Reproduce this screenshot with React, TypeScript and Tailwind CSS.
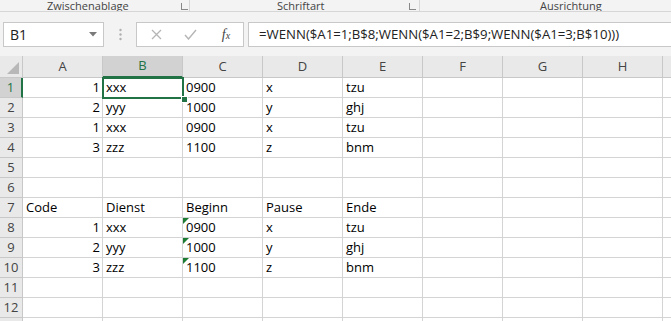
import React from "react";

const COLS = ["A", "B", "C", "D", "E", "F", "G", "H", "I"];

type Cell = { v: string; num?: boolean; tri?: boolean };

const rows: (Cell | null)[][] = [
  [{ v: "1", num: true }, { v: "xxx" }, { v: "0900" }, { v: "x" }, { v: "tzu" }],
  [{ v: "2", num: true }, { v: "yyy" }, { v: "1000" }, { v: "y" }, { v: "ghj" }],
  [{ v: "1", num: true }, { v: "xxx" }, { v: "0900" }, { v: "x" }, { v: "tzu" }],
  [{ v: "3", num: true }, { v: "zzz" }, { v: "1100" }, { v: "z" }, { v: "bnm" }],
  [],
  [],
  [{ v: "Code" }, { v: "Dienst" }, { v: "Beginn" }, { v: "Pause" }, { v: "Ende" }],
  [{ v: "1", num: true }, { v: "xxx" }, { v: "0900", tri: true }, { v: "x" }, { v: "tzu" }],
  [{ v: "2", num: true }, { v: "yyy" }, { v: "1000", tri: true }, { v: "y" }, { v: "ghj" }],
  [{ v: "3", num: true }, { v: "zzz" }, { v: "1100", tri: true }, { v: "z" }, { v: "bnm" }],
  [],
  [],
  [],
];

const ui = { fontFamily: '"Open Sans", "Noto Sans", sans-serif' };

export default function App() {
  return (
    <div className="w-[671px] h-[321px] overflow-hidden bg-white relative" style={ui}>
      {/* Ribbon group labels */}
      <div className="h-[12px] bg-[#f3f3f3] border-b border-[#d6d6d6] relative overflow-hidden text-[11px] text-[#444] leading-[11px] flex items-end">
        <div className="w-[190px] flex items-end relative h-full border-r border-[#d6d6d6]">
          <span className="absolute left-[47px] bottom-[0px]">Zwischenablage</span>
          <span className="absolute left-[181px] bottom-[1px] w-[7px] h-[7px] border-l border-b border-[#888]" />
        </div>
        <div className="w-[230px] flex items-end relative h-full border-r border-[#d6d6d6]">
          <span className="absolute left-[87px] bottom-[0px]">Schriftart</span>
          <span className="absolute left-[219px] bottom-[1px] w-[7px] h-[7px] border-l border-b border-[#888]" />
        </div>
        <div className="flex-1 relative h-full">
          <span className="absolute left-[120px] bottom-[0px]">Ausrichtung</span>
        </div>
      </div>

      {/* Formula bar area */}
      <div className="h-[44px] bg-[#f3f3f3] flex items-start pt-[10px] pl-[3px]">
        <div className="w-[101px] h-[25px] bg-white border border-[#c8c8c8] flex items-center justify-between pl-[6px] pr-[6px] text-[14px] text-[#222]">
          <span>B1</span>
          <svg width="8" height="5" viewBox="0 0 8 5"><path d="M0 0 L8 0 L4 4.5 Z" fill="#7a7a7a" /></svg>
        </div>
        <div className="w-[32px] h-[25px] flex items-center justify-center">
          <svg width="3" height="13" viewBox="0 0 3 13">
            <circle cx="1.5" cy="2" r="1.2" fill="#b0b0b0" />
            <circle cx="1.5" cy="6.5" r="1.2" fill="#b0b0b0" />
            <circle cx="1.5" cy="11" r="1.2" fill="#b0b0b0" />
          </svg>
        </div>
        <div className="w-[108px] h-[25px] bg-white border border-[#c8c8c8] flex items-center">
          <div className="w-[35px] flex justify-center pl-[4px]">
            <svg width="11" height="11" viewBox="0 0 11 11"><path d="M1 1 L10 10 M10 1 L1 10" stroke="#b5b5b5" strokeWidth="1.3" /></svg>
          </div>
          <div className="w-[37px] flex justify-center">
            <svg width="13" height="11" viewBox="0 0 13 11"><path d="M1 6 L4.5 10 L12 1" stroke="#b5b5b5" strokeWidth="1.4" fill="none" /></svg>
          </div>
          <div className="w-[34px] flex justify-center">
            <span className="italic text-[14px] text-[#444] leading-none" style={{ fontFamily: '"Liberation Serif", serif' }}>
              f<span className="text-[10px]">x</span>
            </span>
          </div>
        </div>
        <div className="ml-[4px] flex-1 h-[25px] bg-white border border-[#c8c8c8] border-r-0 flex items-center pl-[10px] text-[13.2px] text-[#222] whitespace-nowrap overflow-hidden">
          =WENN($A1=1;B$8;WENN($A1=2;B$9;WENN($A1=3;B$10)))
        </div>
      </div>

      {/* Grid */}
      <div className="flex flex-col">
        {/* Column headers */}
        <div className="flex h-[22px] bg-[#e9e9e9]">
          <div className="w-[23px] h-[22px] border-r border-b border-[#c8c8c8] relative shrink-0">
            <svg className="absolute right-[3px] bottom-[3px]" width="12" height="12" viewBox="0 0 12 12"><path d="M12 0 L12 12 L0 12 Z" fill="#b8b8b8" /></svg>
          </div>
          {COLS.map((c) => {
            const sel = c === "B";
            return (
              <div
                key={c}
                className={
                  sel
                    ? "w-[80px] shrink-0 h-[22px] border-r border-[#c8c8c8] border-b-2 border-b-[#217346] bg-[#d2d2d2] text-[#217346] flex items-center justify-center text-[13px]"
                    : "w-[80px] shrink-0 h-[22px] border-r border-b border-[#c8c8c8] text-[#444] flex items-center justify-center text-[13px]"
                }
              >
                {c}
              </div>
            );
          })}
        </div>

        {rows.map((r, i) => {
          const sel = i === 0;
          return (
            <div key={i} className="flex h-[20px]">
              <div
                className={
                  sel
                    ? "w-[23px] shrink-0 h-[20px] bg-[#d2d2d2] border-r-2 border-r-[#217346] border-b border-b-[#c8c8c8] text-[#217346] flex items-center justify-center text-[13px]"
                    : "w-[23px] shrink-0 h-[20px] bg-[#e9e9e9] border-r border-b border-[#c8c8c8] text-[#444] flex items-center justify-center text-[13px]"
                }
              >
                {i + 1}
              </div>
              {COLS.map((c, j) => {
                const cell = r[j];
                return (
                  <div
                    key={c}
                    className={
                      "w-[80px] shrink-0 h-[20px] border-r border-b border-[#d4d4d4] relative text-[13px] text-black leading-[19px] whitespace-nowrap flex " +
                      (cell && cell.num ? "justify-end pr-[2px]" : "justify-start pl-[3px]")
                    }
                  >
                    {cell && cell.tri ? (
                      <svg className="absolute left-0 top-0" width="6" height="6" viewBox="0 0 6 6"><path d="M0 0 L6 0 L0 6 Z" fill="#1e7b34" /></svg>
                    ) : null}
                    {cell ? cell.v : null}
                  </div>
                );
              })}
            </div>
          );
        })}
      </div>

      {/* Selection on B1 */}
      <div className="absolute left-[102px] top-[77px] w-[82px] h-[22px] border-2 border-[#217346] pointer-events-none" />
      <div className="absolute left-[181px] top-[96px] w-[5px] h-[5px] bg-[#217346] border border-white box-content pointer-events-none" />
    </div>
  );
}
